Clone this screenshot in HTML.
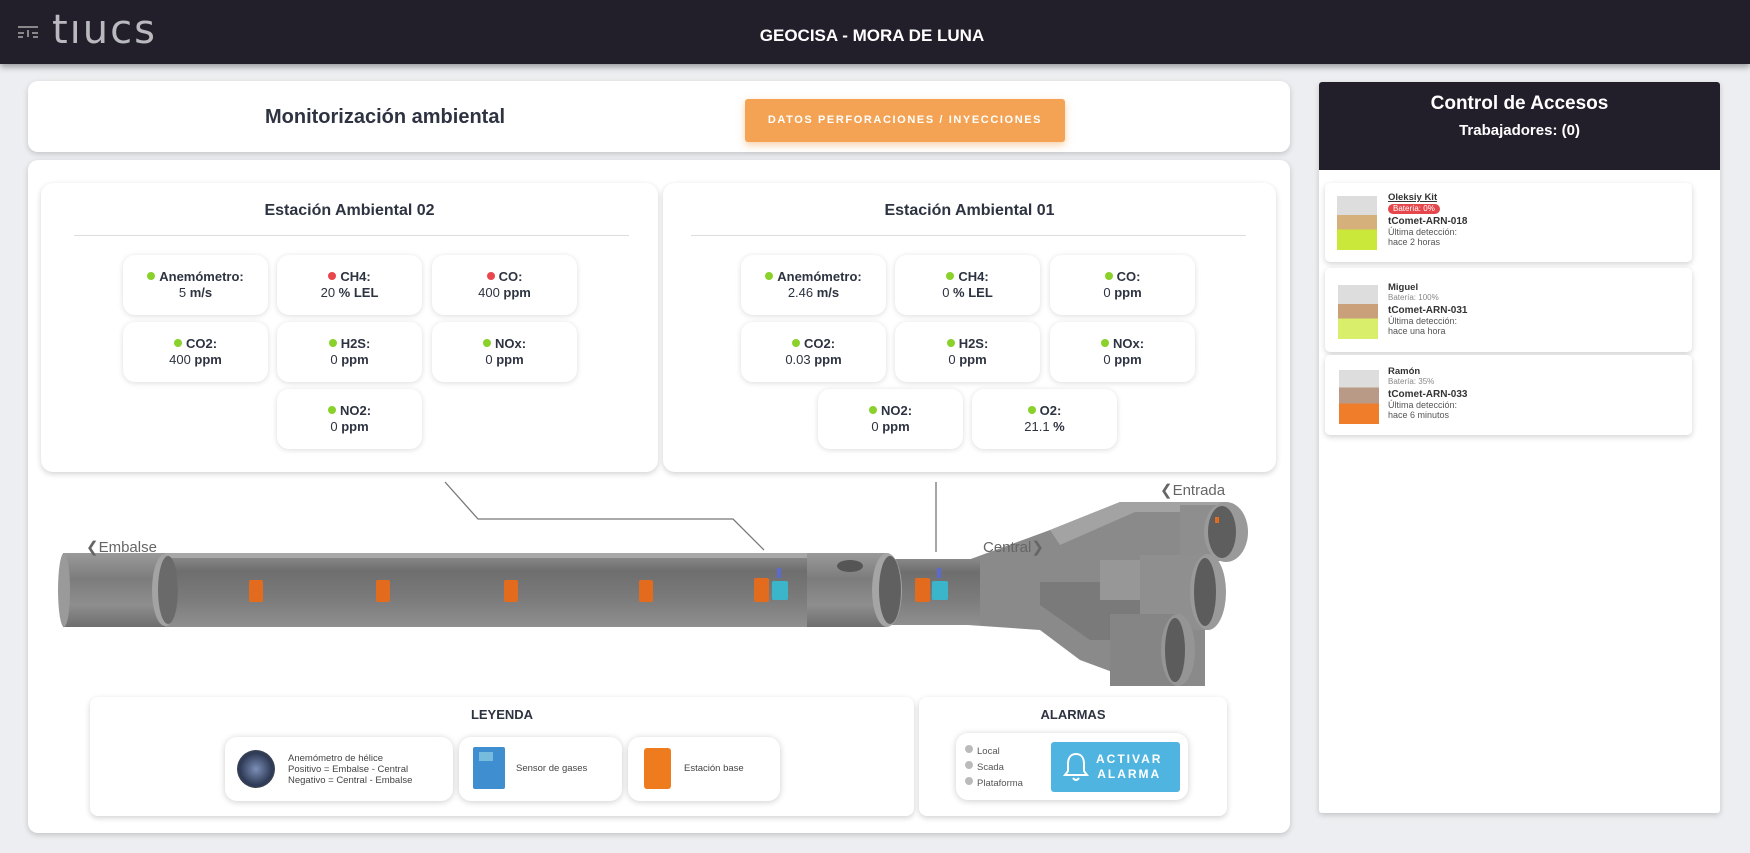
<!DOCTYPE html>
<html><head><meta charset="utf-8"><style>
*{box-sizing:border-box;margin:0;padding:0}
body{width:1750px;height:853px;background:#eceef1;font-family:"Liberation Sans",sans-serif;position:relative;overflow:hidden;color:#2d3340}
.a{position:absolute}
.hdr{left:0;top:0;width:1750px;height:64px;background:#221f2b;box-shadow:0 3px 6px rgba(0,0,0,.35)}
.card{background:#fff;border-radius:10px;box-shadow:0 2px 6px rgba(0,0,0,.18)}
.tile{background:#fff;border-radius:12px;box-shadow:0 1px 6px rgba(0,0,0,.14);text-align:center;font-size:13px;padding-top:14px;line-height:16px;color:#2d3340;width:145px;height:60px}
.tile b{font-weight:bold}
.dot{display:inline-block;width:8px;height:8px;border-radius:50%;background:#8bd12b;margin-right:4px;vertical-align:1px}
.red{background:#e8474d}
.st{font-size:16px;font-weight:bold;text-align:center;color:#2d3340}
.w{font-size:9px;line-height:10px;color:#555}
.w .n{font-weight:bold;color:#333;font-size:9.5px}
.w .id{font-weight:bold;color:#333;font-size:10px;margin-top:3px}
.lg{background:#fff;border-radius:12px;box-shadow:0 1px 7px rgba(0,0,0,.2);font-size:9.5px;line-height:11px;color:#444}
</style></head><body>
<div class="a hdr"></div>
<svg class="a" style="left:16px;top:22px" width="24" height="20" viewBox="0 0 24 20"><g stroke="#aaa" stroke-width="1.5"><line x1="2" y1="5" x2="22" y2="5"/><line x1="2" y1="11" x2="8" y2="11"/><line x1="16" y1="11" x2="22" y2="11"/><line x1="12" y1="8" x2="12" y2="15"/><line x1="2" y1="15" x2="7" y2="15"/><line x1="17" y1="15" x2="22" y2="15"/></g></svg>
<div class="a" style="left:52px;top:8px;font-size:40px;color:#b9b9bf;letter-spacing:2px;line-height:44px;font-family:'DejaVu Sans',sans-serif">tıucs</div>
<div class="a" style="left:672px;top:26px;width:400px;text-align:center;color:#fff;font-weight:bold;font-size:17px">GEOCISA - MORA DE LUNA</div>

<div class="a card" style="left:28px;top:81px;width:1262px;height:71px"></div>
<div class="a" style="left:240px;top:106px;width:290px;text-align:center;font-size:20px;font-weight:bold;color:#2d3340">Monitorización ambiental</div>
<div class="a" style="left:745px;top:99px;width:320px;height:43px;background:#f3a353;border-radius:3px;box-shadow:0 3px 8px rgba(243,163,83,.5);color:#fff;font-size:11px;font-weight:bold;letter-spacing:1.6px;text-align:center;line-height:43px">DATOS PERFORACIONES / INYECCIONES</div>

<div class="a card" style="left:28px;top:160px;width:1262px;height:673px"></div>
<div class="a card" style="left:41px;top:183px;width:617px;height:289px;border-radius:12px"></div>
<div class="a card" style="left:663px;top:183px;width:613px;height:289px;border-radius:12px"></div>
<div class="a st" style="left:41px;top:202px;width:617px">Estación Ambiental 02</div>
<div class="a st" style="left:663px;top:202px;width:613px">Estación Ambiental 01</div>
<div class="a" style="left:74px;top:235px;width:555px;height:1px;background:#ddd"></div>
<div class="a" style="left:691px;top:235px;width:555px;height:1px;background:#ddd"></div>

<div class="a tile" style="left:123px;top:255px"><b><span class="dot"></span>Anemómetro:</b><br>5 <b>m/s</b></div>
<div class="a tile" style="left:277px;top:255px"><b><span class="dot red"></span>CH4:</b><br>20 <b>% LEL</b></div>
<div class="a tile" style="left:432px;top:255px"><b><span class="dot red"></span>CO:</b><br>400 <b>ppm</b></div>
<div class="a tile" style="left:123px;top:322px"><b><span class="dot"></span>CO2:</b><br>400 <b>ppm</b></div>
<div class="a tile" style="left:277px;top:322px"><b><span class="dot"></span>H2S:</b><br>0 <b>ppm</b></div>
<div class="a tile" style="left:432px;top:322px"><b><span class="dot"></span>NOx:</b><br>0 <b>ppm</b></div>
<div class="a tile" style="left:277px;top:389px"><b><span class="dot"></span>NO2:</b><br>0 <b>ppm</b></div>

<div class="a tile" style="left:741px;top:255px"><b><span class="dot"></span>Anemómetro:</b><br>2.46 <b>m/s</b></div>
<div class="a tile" style="left:895px;top:255px"><b><span class="dot"></span>CH4:</b><br>0 <b>% LEL</b></div>
<div class="a tile" style="left:1050px;top:255px"><b><span class="dot"></span>CO:</b><br>0 <b>ppm</b></div>
<div class="a tile" style="left:741px;top:322px"><b><span class="dot"></span>CO2:</b><br>0.03 <b>ppm</b></div>
<div class="a tile" style="left:895px;top:322px"><b><span class="dot"></span>H2S:</b><br>0 <b>ppm</b></div>
<div class="a tile" style="left:1050px;top:322px"><b><span class="dot"></span>NOx:</b><br>0 <b>ppm</b></div>
<div class="a tile" style="left:818px;top:389px"><b><span class="dot"></span>NO2:</b><br>0 <b>ppm</b></div>
<div class="a tile" style="left:972px;top:389px"><b><span class="dot"></span>O2:</b><br>21.1 <b>%</b></div>

<svg class="a" style="left:0;top:470px" width="1300" height="230" viewBox="0 470 1300 230">
<defs>
<linearGradient id="pg" x1="0" y1="0" x2="0" y2="1"><stop offset="0" stop-color="#9a9a9a"/><stop offset=".35" stop-color="#7c7c7c"/><stop offset=".7" stop-color="#8e8e8e"/><stop offset="1" stop-color="#6e6e6e"/></linearGradient>
<linearGradient id="ig" x1="0" y1="0" x2="0" y2="1"><stop offset="0" stop-color="#888"/><stop offset=".2" stop-color="#6e6e6e"/><stop offset=".6" stop-color="#7b7b7b"/><stop offset="1" stop-color="#8f8f8f"/></linearGradient>
</defs>
<g fill="none" stroke="#777" stroke-width="1.3"><polyline points="445,482 478,519 733,519 764,550"/><line x1="936" y1="482" x2="936" y2="552"/></g>
<!-- Y fitting -->
<path d="M968 560 L1050 530 L1120 502 L1226 502 L1226 560 L1205 560 L1205 686 L1150 686 L1080 660 L1040 630 L968 625 Z" fill="#8a8a8a"/>
<path d="M1050 530 L1120 502 L1226 502 L1226 512 L1135 512 L1060 545 Z" fill="#a3a3a3"/>
<path d="M1040 582 L1120 582 L1160 610 L1160 640 L1090 640 L1040 605 Z" fill="#7a7a7a"/>
<path d="M1100 560 L1200 560 L1200 600 L1100 600 Z" fill="#979797"/>
<rect x="1180" y="505" width="46" height="56" fill="#8e8e8e"/>
<ellipse cx="1226" cy="532" rx="22" ry="30" fill="#9a9a9a"/><ellipse cx="1222" cy="532" rx="14" ry="26" fill="#5e5e5e"/>
<rect x="1140" y="555" width="68" height="75" fill="#8f8f8f"/>
<ellipse cx="1208" cy="592" rx="18" ry="38" fill="#9a9a9a"/><ellipse cx="1205" cy="592" rx="11" ry="34" fill="#5c5c5c"/>
<rect x="1110" y="614" width="68" height="72" fill="#858585"/>
<ellipse cx="1178" cy="650" rx="17" ry="36" fill="#959595"/><ellipse cx="1175" cy="650" rx="10" ry="32" fill="#5c5c5c"/>
<rect x="1215" y="517" width="4" height="6" fill="#e36b1e"/>
<!-- main pipe -->
<rect x="160" y="557" width="650" height="70" fill="url(#ig)"/>
<rect x="160" y="553" width="650" height="5" fill="#a8a8a8"/>
<rect x="63" y="553" width="102" height="74" fill="url(#pg)"/>
<ellipse cx="64" cy="590" rx="6" ry="37" fill="#9a9a9a"/>
<ellipse cx="165" cy="590" rx="13" ry="36" fill="#a3a3a3"/><ellipse cx="168" cy="590" rx="10" ry="34" fill="#6a6a6a"/>
<rect x="880" y="559" width="100" height="66" fill="url(#ig)"/>
<rect x="807" y="553" width="80" height="74" fill="url(#pg)"/>
<ellipse cx="850" cy="566" rx="13" ry="6" fill="#555"/>
<ellipse cx="887" cy="590" rx="15" ry="37" fill="#a5a5a5"/><ellipse cx="890" cy="590" rx="11" ry="34" fill="#606060"/>
<g fill="#e36b1e"><rect x="249" y="580" width="14" height="22" rx="2"/><rect x="376" y="580" width="14" height="22" rx="2"/><rect x="504" y="580" width="14" height="22" rx="2"/><rect x="639" y="580" width="14" height="22" rx="2"/><rect x="754" y="578" width="15" height="24" rx="2"/><rect x="915" y="578" width="15" height="24" rx="2"/></g>
<g fill="#3ab5c9"><rect x="772" y="581" width="16" height="19" rx="2"/><rect x="932" y="581" width="16" height="19" rx="2"/></g>
<g fill="#5a6acd"><rect x="777" y="568" width="4" height="10"/><rect x="937" y="568" width="4" height="10"/></g>
<g font-size="15" fill="#666" font-family="Liberation Sans,sans-serif"><text x="86" y="552">❮Embalse</text><text x="983" y="552">Central❯</text><text x="1160" y="495">❮Entrada</text></g>
</svg>

<div class="a card" style="left:90px;top:697px;width:824px;height:119px;border-radius:8px"></div>
<div class="a card" style="left:919px;top:697px;width:308px;height:119px;border-radius:8px"></div>
<div class="a" style="left:90px;top:707px;width:824px;text-align:center;font-weight:bold;font-size:13px">LEYENDA</div>
<div class="a" style="left:919px;top:707px;width:308px;text-align:center;font-weight:bold;font-size:13px">ALARMAS</div>
<div class="a lg" style="left:225px;top:737px;width:228px;height:64px"></div>
<div class="a" style="left:237px;top:750px;width:38px;height:38px;border-radius:50%;background:radial-gradient(#7c8fb8,#2e3a55 60%,#555)"></div>
<div class="a lg" style="left:288px;top:753px;box-shadow:none;background:none">Anemómetro de hélice<br>Positivo = Embalse - Central<br>Negativo = Central - Embalse</div>
<div class="a lg" style="left:459px;top:737px;width:163px;height:64px"></div>
<div class="a" style="left:473px;top:747px;width:32px;height:42px;background:#3f8fd0;border-radius:2px"><div style="margin:5px 6px;width:14px;height:9px;background:#7bd;"></div></div>
<div class="a lg" style="left:516px;top:763px;background:none;box-shadow:none">Sensor de gases</div>
<div class="a lg" style="left:628px;top:737px;width:152px;height:64px"></div>
<div class="a" style="left:644px;top:748px;width:27px;height:41px;background:#ef7b1f;border-radius:3px"></div>
<div class="a lg" style="left:684px;top:763px;background:none;box-shadow:none">Estación base</div>
<div class="a lg" style="left:956px;top:733px;width:232px;height:67px"></div>
<div class="a" style="left:965px;top:744px;font-size:9.5px;line-height:16px;color:#555"><span class="dot" style="background:#bbb"></span>Local<br><span class="dot" style="background:#bbb"></span>Scada<br><span class="dot" style="background:#bbb"></span>Plataforma</div>
<div class="a" style="left:1051px;top:742px;width:129px;height:50px;background:#4fb5e0;border-radius:3px"></div>
<svg class="a" style="left:1062px;top:751px" width="28" height="32" viewBox="0 0 28 32"><path d="M14 3 C8 3 6 8 6 13 L6 20 L3 24 L25 24 L22 20 L22 13 C22 8 20 3 14 3 Z M11 27 Q14 31 17 27" fill="none" stroke="#fff" stroke-width="2"/></svg>
<div class="a" style="left:1096px;top:752px;color:#fff;font-weight:bold;font-size:12px;letter-spacing:2px;line-height:15px;text-align:center">ACTIVAR<br>ALARMA</div>

<div class="a card" style="left:1319px;top:82px;width:401px;height:731px;border-radius:3px"></div>
<div class="a" style="left:1319px;top:82px;width:401px;height:88px;background:#221f2b;border-radius:3px 3px 0 0"></div>
<div class="a" style="left:1319px;top:93px;width:401px;text-align:center;color:#fff;font-weight:bold;font-size:19px">Control de Accesos</div>
<div class="a" style="left:1319px;top:122px;width:401px;text-align:center;color:#fff;font-weight:bold;font-size:15px">Trabajadores: (0)</div>

<div class="a card" style="left:1325px;top:183px;width:367px;height:79px;border-radius:5px"></div>
<div class="a card" style="left:1325px;top:268px;width:367px;height:84px;border-radius:5px"></div>
<div class="a card" style="left:1325px;top:355px;width:367px;height:80px;border-radius:5px"></div>
<div class="a" style="left:1337px;top:196px;width:40px;height:54px;background:linear-gradient(#ddd 0,#ddd 35%,#d5b07a 35%,#d5b07a 62%,#c9e83a 62%)"></div>
<div class="a" style="left:1338px;top:285px;width:40px;height:54px;background:linear-gradient(#ddd 0,#ddd 35%,#c9a07a 35%,#c9a07a 62%,#d9ee6a 62%)"></div>
<div class="a" style="left:1339px;top:370px;width:40px;height:54px;background:linear-gradient(#ddd 0,#ddd 32%,#b99a86 32%,#b99a86 62%,#f07d2a 62%)"></div>
<div class="a w" style="left:1388px;top:193px"><div class="n" style="text-decoration:underline">Oleksiy Kit</div><div style="background:#e5474c;color:#fff;border-radius:6px;padding:0 5px;display:inline-block;font-size:8px">Batería: 0%</div><div class="id">tComet-ARN-018</div>Última detección:<br>hace 2 horas</div>
<div class="a w" style="left:1388px;top:283px"><div class="n">Miguel</div><div style="font-size:8px;color:#888">Batería: 100%</div><div class="id">tComet-ARN-031</div>Última detección:<br>hace una hora</div>
<div class="a w" style="left:1388px;top:367px"><div class="n">Ramón</div><div style="font-size:8px;color:#888">Batería: 35%</div><div class="id">tComet-ARN-033</div>Última detección:<br>hace 6 minutos</div>
</body></html>
